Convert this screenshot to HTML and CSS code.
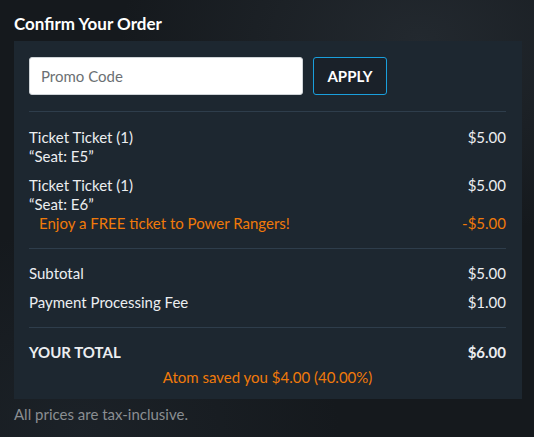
FILE: index.html
```html
<!DOCTYPE html>
<html>
<head>
<meta charset="utf-8">
<link rel="stylesheet" href="styles.css">
</head>
<body>
<div class="page">
  <h1 class="title">Confirm Your Order</h1>
  <div class="panel">
    <div class="promo">
      <input class="promo-input" type="text" placeholder="Promo Code">
      <button class="apply">APPLY</button>
    </div>
    <div class="section items">
      <div class="item">
        <div class="row"><span>Ticket Ticket (1)</span><span class="price">$5.00</span></div>
        <div class="row"><span>“Seat: E5”</span></div>
      </div>
      <div class="item">
        <div class="row"><span>Ticket Ticket (1)</span><span class="price">$5.00</span></div>
        <div class="row"><span>“Seat: E6”</span></div>
        <div class="row discount"><span>Enjoy a FREE ticket to Power Rangers!</span><span>-$5.00</span></div>
      </div>
    </div>
    <div class="section sums">
      <div class="row"><span>Subtotal</span><span class="price">$5.00</span></div>
      <div class="row"><span>Payment Processing Fee</span><span class="price">$1.00</span></div>
    </div>
    <div class="section total">
      <div class="row total-row"><span>YOUR TOTAL</span><span>$6.00</span></div>
      <div class="saved">Atom saved you $4.00 (40.00%)</div>
    </div>
  </div>
  <p class="note">All prices are tax-inclusive.</p>
</div>
</body>
</html>
```
FILE: styles.css
```css
html, body {
  margin: 0;
  padding: 0;
}
body {
  width: 534px;
  height: 437px;
  overflow: hidden;
  background:
    radial-gradient(ellipse 300px 200px at 420px 40px, rgba(60,70,80,0.35), transparent),
    radial-gradient(ellipse 260px 200px at 80px 430px, rgba(40,50,60,0.35), transparent),
    #15191d;
  font-family: Lato, "Open Sans", sans-serif;
  color: #eceef0;
}
.page {
  padding: 13px 0 0 14px;
}
.title {
  margin: 0 0 6px 0;
  font-size: 17px;
  line-height: 22px;
  font-weight: 700;
  color: #ffffff;
}
.panel {
  width: 477px;
  padding: 16px 16px 12px 15px;
  background: #1d2730;
}
.promo {
  display: flex;
  gap: 10px;
  padding-bottom: 16px;
  border-bottom: 1px solid #2e3d4b;
}
.promo-input {
  width: 274px;
  height: 38px;
  box-sizing: border-box;
  border: 1px solid #cfd4d8;
  border-radius: 3px;
  background: #ffffff;
  padding: 0 11px;
  font-family: inherit;
  font-size: 15px;
  color: #333;
  outline: none;
}
.promo-input::placeholder {
  color: #6b6f73;
}
.apply {
  width: 74px;
  height: 38px;
  box-sizing: border-box;
  border: 1px solid #1a9fdc;
  border-radius: 3px;
  background: #1a2129;
  color: #ffffff;
  font-family: inherit;
  font-size: 15px;
  font-weight: 700;
  padding: 0;
}
.section {
  padding: 16px 0 15px 0;
  border-bottom: 1px solid #2e3d4b;
}
.total {
  border-bottom: none;
  padding-top: 15px;
  padding-bottom: 0;
}
.items {
  display: flex;
  flex-direction: column;
  gap: 10px;
  padding-bottom: 15px;
}
.sums {
  display: flex;
  flex-direction: column;
  gap: 10px;
  padding-top: 15px;
}
.row {
  display: flex;
  justify-content: space-between;
  font-size: 15px;
  line-height: 19px;
}
.discount {
  color: #f07a0a;
  padding-left: 10px;
}
.total-row {
  font-weight: 700;
}
.saved {
  margin-top: 6px;
  text-align: center;
  color: #f07a0a;
  font-size: 15px;
  line-height: 19px;
}
.note {
  margin: 6px 0 0 0;
  font-size: 15px;
  line-height: 19px;
  color: #8a8e92;
}
```
